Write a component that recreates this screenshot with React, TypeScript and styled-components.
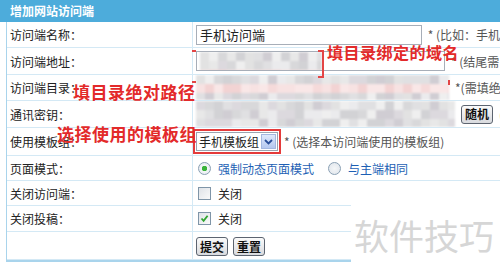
import React from "react";
import styled, { createGlobalStyle } from "styled-components";

const GlobalStyle = createGlobalStyle`
  html, body { margin: 0; padding: 0; background: #fff; }
  body {
    width: 500px;
    height: 267px;
    overflow: hidden;
    font-family: "Noto Sans CJK SC", "Liberation Sans", sans-serif;
    font-size: 12px;
    color: #222;
  }
`;

const Page = styled.div`
  position: relative;
  width: 500px;
  height: 267px;
  background: #fff;
`;

const Header = styled.div`
  height: 22px;
  background: #4dacdb;
  color: #fff;
  font-weight: bold;
  font-size: 12px;
  line-height: 22px;
  padding-left: 10px;
`;

const Table = styled.div`
  margin-left: 6px;
  display: grid;
  grid-template-columns: 186px 1fr;
  border-left: 1px solid #a9d4ec;
  border-bottom: 2px solid #a9d4ec;
`;

const Label = styled.div<{ h: number }>`
  height: ${(p) => p.h - 1}px;
  display: flex;
  align-items: center;
  padding-left: 3px;
  border-bottom: 1px solid #d4e9f5;
  border-right: 1px solid #d4e9f5;
  white-space: nowrap;
`;

const Value = styled.div<{ h: number }>`
  height: ${(p) => p.h - 1}px;
  display: flex;
  align-items: center;
  gap: 6px;
  padding-left: 3px;
  border-bottom: 1px solid #d4e9f5;
  white-space: nowrap;
  overflow: hidden;
`;

const TextInput = styled.div<{ w: number }>`
  position: relative;
  width: ${(p) => p.w}px;
  height: 20px;
  box-sizing: border-box;
  border: 1px solid #a7aeb8;
  background: #fff;
  font-size: 13px;
  line-height: 18px;
  padding-left: 3px;
  overflow: hidden;
`;

const Hint = styled.span`
  color: #555;
  font-size: 12px;
`;

const Select = styled.div`
  display: flex;
  align-items: center;
  height: 19px;
  box-sizing: border-box;
  border: 1px solid #9aa4b0;
  background: #fff;
  font-size: 12px;
  padding-left: 2px;
  outline: 2px solid #e43b3b;
  outline-offset: 1px;
`;

const SelectArrow = styled.span`
  display: inline-flex;
  align-items: center;
  justify-content: center;
  width: 15px;
  height: 15px;
  margin: 0 1px 0 2px;
  background: linear-gradient(#dfe9fb, #b4c8ef);
  border: 1px solid #a4b8e0;
  box-sizing: border-box;
`;

const Choice = styled.label<{ blue?: boolean }>`
  display: inline-flex;
  align-items: center;
  gap: 7px;
  color: ${(p) => (p.blue ? "#1d5fb4" : "#222")};
  margin-right: 6px;
`;

const Radio = styled.span<{ on?: boolean }>`
  width: 11px;
  height: 11px;
  border-radius: 50%;
  border: 1px solid #8aa0b4;
  background: radial-gradient(circle, ${(p) => (p.on ? "#3bb33b 0 2.5px," : "")} #f4f6f8 ${(p) => (p.on ? "3px" : "0")}, #dfe4ea 100%);
  margin-left: 2px;
`;

const Check = styled.span`
  display: inline-flex;
  align-items: center;
  justify-content: center;
  width: 11px;
  height: 11px;
  border: 1px solid #7f95a8;
  background: linear-gradient(135deg, #dfe3e8, #fafafa);
  margin-left: 2px;
`;

const Button = styled.button`
  font-family: "Noto Sans CJK SC", sans-serif;
  font-size: 12px;
  font-weight: bold;
  color: #111;
  height: 19px;
  padding: 0 3px;
  border: 1px solid #5c6470;
  border-radius: 3px;
  background: linear-gradient(#fbfbfb, #d8dade);
  line-height: 16px;
`;

const ButtonRow = styled.div`
  display: flex;
  gap: 5px;
  margin-top: 2px;
`;

const Note = styled.div<{ size: number }>`
  position: absolute;
  color: #e32a2a;
  font-weight: bold;
  font-size: ${(p) => p.size}px;
  letter-spacing: 0.5px;
  white-space: nowrap;
`;

const Bracket = styled.div`
  position: absolute;
  border: 2px solid #e34545;
  border-left: none;
`;

const Tick = styled.div`
  position: absolute;
  width: 4px;
  height: 2px;
  background: #e34545;
`;

const Watermark = styled.div`
  position: absolute;
  left: 351px;
  top: 188px;
  width: 149px;
  height: 79px;
  background: #fff;
  color: #d6d6d6;
  font-size: 35px;
  line-height: 46px;
  padding: 24px 0 0 3px;
  box-sizing: border-box;
  letter-spacing: 0;
`;

const MosaicSvg = styled.svg`
  display: block;
  filter: blur(1.2px);
  flex: none;
`;

const grays = ["#e0e0e2", "#d8d8da", "#e8e8e8", "#d2d2d5", "#e2e2e2", "#efefef", "#dcd9de", "#d0cdd3", "#ebebed"];
const pinks = ["#f5dada", "#f7e2e2", "#f2d3d3", "#f9e7e7"];

function Mosaic({ w, h, seed, pinkRows }: { w: number; h: number; seed: number; pinkRows: number[] }) {
  const cell = 9;
  const cols = Math.ceil(w / cell);
  const rows = Math.ceil(h / cell);
  let s = seed;
  const rnd = () => {
    s = (s * 9301 + 49297) % 233280;
    return s / 233280;
  };
  const rects = [];
  for (let r = 0; r < rows; r++) {
    for (let c = 0; c < cols; c++) {
      const pal = pinkRows.includes(r) ? pinks : grays;
      rects.push(
        <rect key={r + "-" + c} x={c * cell} y={r * cell} width={cell} height={cell} fill={pal[Math.floor(rnd() * pal.length)]} />
      );
    }
  }
  return (
    <MosaicSvg width={w} height={h} viewBox={`0 0 ${w} ${h}`}>
      {rects}
    </MosaicSvg>
  );
}

const CheckMark = () => (
  <svg width="9" height="9" viewBox="0 0 9 9">
    <path d="M1.5 4.5 L3.6 6.8 L7.6 1.8" fill="none" stroke="#2fa52f" strokeWidth="1.8" />
  </svg>
);

const Arrow = () => (
  <svg width="9" height="6" viewBox="0 0 9 6">
    <path d="M1 1 L4.5 4.5 L8 1" fill="none" stroke="#2a4f9a" strokeWidth="1.8" />
  </svg>
);

export default function App() {
  return (
    <Page>
      <GlobalStyle />
      <Header>增加网站访问端</Header>
      <Table>
        <Label h={26}>访问端名称：</Label>
        <Value h={26}>
          <TextInput w={249}>手机访问端</TextInput>
          <Hint>* (比如：手机</Hint>
        </Value>

        <Label h={27}>访问端地址：</Label>
        <Value h={27}>
          <TextInput w={249}>
            <Mosaic w={122} h={20} seed={7} pinkRows={[2]} />
          </TextInput>
          <Hint>* (结尾需</Hint>
        </Value>

        <Label h={26}>访问端目录：</Label>
        <Value h={26}>
          <Mosaic w={253} h={25} seed={31} pinkRows={[1]} />
          <Hint>*(需填绝对</Hint>
        </Value>

        <Label h={27}>通讯密钥：</Label>
        <Value h={27}>
          <Mosaic w={259} h={26} seed={113} pinkRows={[]} />
          <Button>随机</Button>
          <Hint>(</Hint>
        </Value>

        <Label h={28}>使用模板组：</Label>
        <Value h={28}>
          <Select>
            手机模板组
            <SelectArrow>
              <Arrow />
            </SelectArrow>
          </Select>
          <Hint>* (选择本访问端使用的模板组)</Hint>
        </Value>

        <Label h={25}>页面模式：</Label>
        <Value h={25}>
          <Choice blue>
            <Radio on />
            强制动态页面模式
          </Choice>
          <Choice blue>
            <Radio />
            与主端相同
          </Choice>
        </Value>

        <Label h={25}>关闭访问端：</Label>
        <Value h={25}>
          <Choice>
            <Check />
            关闭
          </Choice>
        </Value>

        <Label h={26}>关闭投稿：</Label>
        <Value h={26}>
          <Choice>
            <Check>
              <CheckMark />
            </Check>
            关闭
          </Choice>
        </Value>

        <Label h={28} />
        <Value h={28}>
          <ButtonRow>
            <Button>提交</Button>
            <Button>重置</Button>
          </ButtonRow>
        </Value>
      </Table>

      <Bracket style={{ left: 318, top: 50, width: 4, height: 24 }} />
      <Tick style={{ left: 192, top: 50 }} />
      <Tick style={{ left: 192, top: 81 }} />
      <Tick style={{ left: 448, top: 80, width: 2, height: 5 }} />
      <Note size={16} style={{ left: 327, top: 40 }}>填目录绑定的域名</Note>
      <Note size={17} style={{ left: 73, top: 79 }}>填目录绝对路径</Note>
      <Note size={17} style={{ left: 57, top: 121 }}>选择使用的模板组</Note>
      <Watermark>软件技巧</Watermark>
    </Page>
  );
}
